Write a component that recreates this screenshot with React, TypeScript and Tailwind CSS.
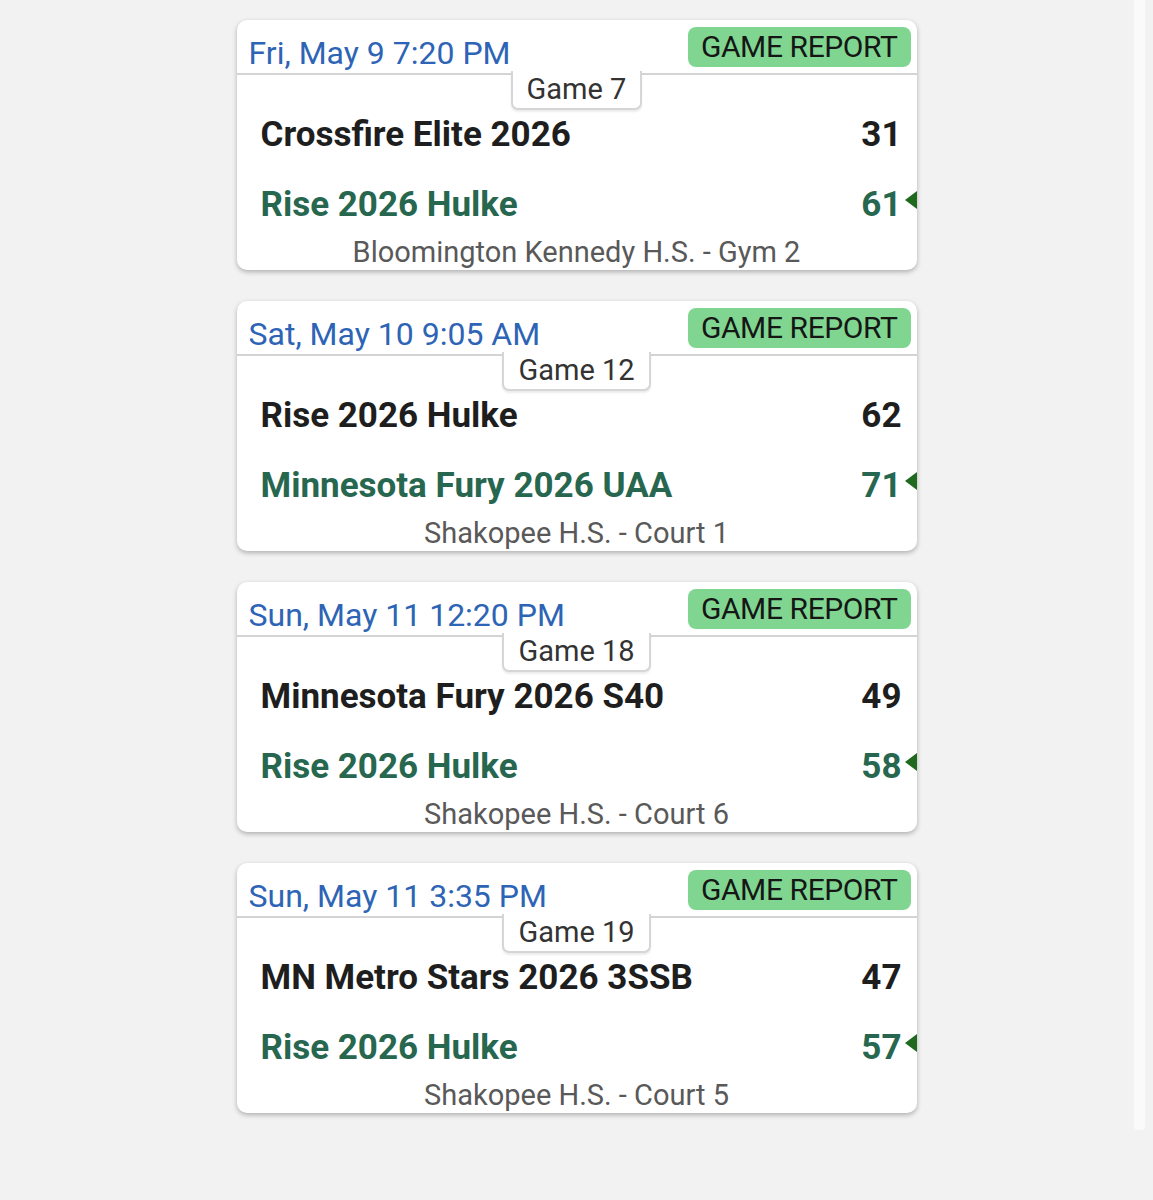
import React from "react";

type Game = {
  date: string;
  game: string;
  t1: string;
  s1: number;
  t2: string;
  s2: number;
  loc: string;
};

const games: Game[] = [
  { date: "Fri, May 9 7:20 PM", game: "Game 7", t1: "Crossfire Elite 2026", s1: 31, t2: "Rise 2026 Hulke", s2: 61, loc: "Bloomington Kennedy H.S. - Gym 2" },
  { date: "Sat, May 10 9:05 AM", game: "Game 12", t1: "Rise 2026 Hulke", s1: 62, t2: "Minnesota Fury 2026 UAA", s2: 71, loc: "Shakopee H.S. - Court 1" },
  { date: "Sun, May 11 12:20 PM", game: "Game 18", t1: "Minnesota Fury 2026 S40", s1: 49, t2: "Rise 2026 Hulke", s2: 58, loc: "Shakopee H.S. - Court 6" },
  { date: "Sun, May 11 3:35 PM", game: "Game 19", t1: "MN Metro Stars 2026 3SSB", s1: 47, t2: "Rise 2026 Hulke", s2: 57, loc: "Shakopee H.S. - Court 5" },
];

function Card({ g }: { g: Game }) {
  return (
    <div className="w-[680px] h-[250px] bg-white rounded-[10px] shadow-[0_2px_5px_rgba(0,0,0,0.28)] flex flex-col">
      <div className="h-[55px] border-b-2 border-[#d4d4d4] flex items-start justify-between">
        <div className="pl-[12px] pt-[13px] text-[32px] leading-[40px] text-[#2e64b5]">{g.date}</div>
        <div className="mt-[7px] mr-[6px] h-[40px] px-[13px] rounded-[8px] bg-[#80d690] text-[30px] leading-[40px] text-[#161616] tracking-[-0.4px]">
          GAME REPORT
        </div>
      </div>
      <div className="relative -mt-[4px] self-center h-[39px] px-[14px] bg-white border-x-2 border-b-2 border-[#d6d6d6] rounded-b-[7px] shadow-[0_2px_2px_rgba(0,0,0,0.08)] text-[29px] leading-[36px] text-[#333]">
        {g.game}
      </div>
      <div className="h-[50px] flex items-center justify-between pl-[24px] pr-[15px] text-[35px] font-bold text-[#1e1e1e]">
        <span>{g.t1}</span>
        <span>{g.s1}</span>
      </div>
      <div className="relative mt-[20px] h-[50px] flex items-center justify-between pl-[24px] pr-[15px] text-[35px] font-bold text-[#27674f]">
        <span>{g.t2}</span>
        <span>{g.s2}</span>
        <div className="absolute right-0 top-[11px] w-0 h-0 border-y-[9px] border-y-transparent border-r-[12px] border-r-[#1f6a1f]" />
      </div>
      <div className="mt-[6px] h-[32px] text-center text-[29px] leading-[32px] text-[#595959]">{g.loc}</div>
    </div>
  );
}

export default function App() {
  return (
    <div className="relative w-[1153px] h-[1200px] bg-[#f2f2f2] overflow-hidden" style={{ fontFamily: "Roboto, 'Liberation Sans', sans-serif" }}>
      <div className="absolute left-[1134px] top-0 w-[11px] h-[1130px] bg-[#fafafa] rounded-b-[4px]" />
      <div className="flex flex-col items-center gap-[31px] pt-[20px]">
        {games.map((g, i) => (
          <Card key={i} g={g} />
        ))}
      </div>
    </div>
  );
}
